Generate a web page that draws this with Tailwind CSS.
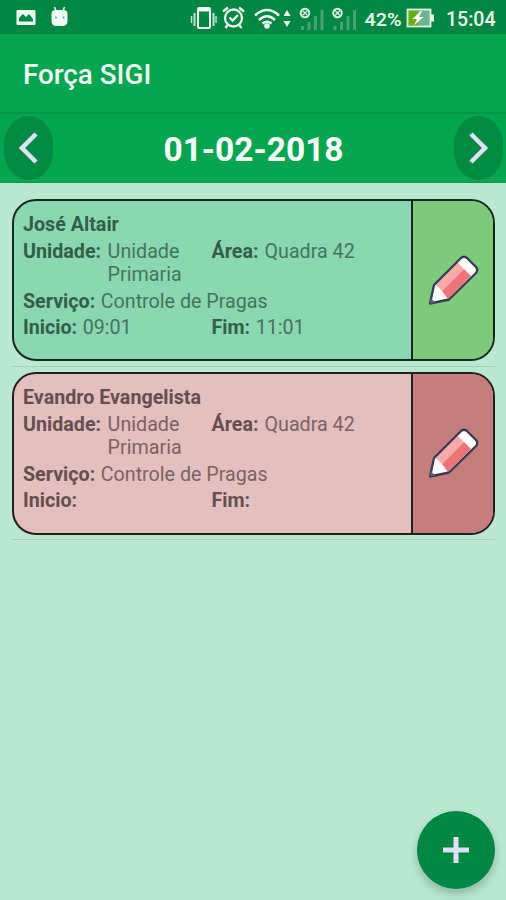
<!DOCTYPE html>
<html lang="pt-BR">
<head>
    <meta charset="UTF-8">
    <meta name="viewport" content="width=device-width, initial-scale=1.0">
    <title>Força SIGI</title>
    <script src="https://cdn.jsdelivr.net/npm/@tailwindcss/browser@4"></script>
</head>
<body class="bg-[#b9e7cf] font-['Roboto',sans-serif] h-[900px] overflow-hidden relative">
    <!-- Pencil shared by the cards -->
    <svg class="hidden">
        <symbol id="pencil" viewBox="0 0 52 52">
            <path d="M2 49.500 6 31 33 4Q36 1.500 39 4L48 13Q50.500 16 48 19L21 45.500Z" fill="#fff"/>
            <path d="M7 30 29 8 36 15 14 37Z" fill="#f8aaa9"/>
            <path d="M14 37 36 15 43 22 20 45Z" fill="#ef7478"/>
            <path d="M2 49.500 6 31 33 4Q36 1.500 39 4L48 13Q50.500 16 48 19L21 45.500Z" fill="none" stroke="#353b50" stroke-width="2.300" stroke-linejoin="round"/>
            <path d="M2 49.500 3 44 7 48.500Z" fill="#5d617b"/>
        </symbol>
    </svg>

    <!-- Status bar -->
    <header class="h-[34px] bg-[#018741] flex items-center text-white">
        <svg class="w-full h-[34px]" viewBox="0 0 506 34" fill="none">
            <rect x="16.500" y="10" width="19" height="15" rx="1" fill="#effff4"/>
            <path d="M19 21.500V18l4-4 3 3 3-3 4 5v2.500Z" fill="#018741"/>
            <path d="M54.500 7l1.500 4M64.500 7l-1.500 4" stroke="#e6fff0" stroke-width="1.500"/>
            <path d="M51.500 14q0-4 4-4h8q4 0 4 4v7q0 5-5 5h-6q-5 0-5-5Z" fill="#effff4"/>
            <circle cx="56" cy="17.500" r="1" fill="#60a97c"/><circle cx="63.500" cy="17.500" r="1" fill="#60a97c"/>

            <!-- vibrate -->
            <rect x="198" y="8" width="12" height="20" rx="1" stroke="#effff4" stroke-width="2"/>
            <path d="M198 10h12" stroke="#effff4" stroke-width="3"/>
            <path d="M194.500 13v13M213.500 13v13" stroke="#bfe5cd" stroke-width="2"/>
            <path d="M191.500 16v7M216 16v7" stroke="#bfe5cd" stroke-width="1.500"/>
            <!-- alarm -->
            <circle cx="233.500" cy="18" r="8.500" stroke="#effff4" stroke-width="2.300"/>
            <path d="M223 11.500 228 7.500M239 7.500l5 4M228 24.500l-2.500 3.500M239 24.500l2.500 3.500M229.500 17.500l3 3 5.500-5.500" stroke="#effff4" stroke-width="2.300"/>
            <!-- wifi -->
            <path d="M255 15.500q12-11 24 0M259 20q8-7.500 16 0M262.500 23.500q4.500-3.500 9 0" stroke="#effff4" stroke-width="2.600"/>
            <circle cx="267" cy="26" r="2.800" fill="#effff4"/>
            <path d="M283.500 16l3.500-6 3.500 6ZM283.500 21l3.500 6 3.500-6Z" fill="#effff4"/>
            <!-- signals -->
            <g id="signal">
                <path d="M302.500 26v4M309 22v8M315.500 16v14M322 10v20" stroke="#45a56c" stroke-width="3"/>
                <circle cx="305" cy="13" r="4.300" stroke="#dff7e8" stroke-width="2"/>
                <path d="M302.500 10.500l5 5M307.500 10.500l-5 5" stroke="#dff7e8" stroke-width="1.300"/>
            </g>
            <use href="#signal" x="32.500"/>
            <!-- battery -->
            <rect x="408" y="9.500" width="22" height="17" fill="#6bb58f"/>
            <rect x="408" y="9.500" width="10" height="17" fill="#64ad16"/>
            <rect x="407.500" y="9.500" width="23" height="17" stroke="#e0f5e5" stroke-width="1.800"/>
            <rect x="431" y="14.500" width="3" height="7" fill="#effff4"/>
            <path d="M420.500 11 412.500 19h4.500l-3 6.500 9.500-8.500H419l3-6Z" fill="#fff"/>

            <text x="364.500" y="26" font-size="19" font-weight="500" textLength="37" lengthAdjust="spacingAndGlyphs" fill="#effff4">42%</text>
            <text x="446" y="26" font-size="20" font-weight="500" textLength="49.500" lengthAdjust="spacingAndGlyphs" fill="#effff4">15:04</text>
        </svg>
    </header>

    <!-- App bar -->
    <div class="h-[80px] bg-[#03a64f] border-b-2 border-[#029647] flex items-center pl-[23px] pt-[3px]">
        <h1 class="text-[27.800px] font-medium text-[#f2fff6]">Força SIGI</h1>
    </div>

    <!-- Date selector -->
    <div class="h-[69px] bg-[#03a64f] border-b border-[#079a4b] flex items-center justify-between pl-1 pr-[3px]">
        <button class="w-[49px] h-[64px] rounded-[24.500px/28px] bg-[#018b42] flex items-center justify-center">
            <svg class="w-6 h-8" viewBox="0 0 24 32" fill="none" stroke="#e2e0f8" stroke-width="4.500"><path d="M19 2 5 16 19 30"/></svg>
        </button>
        <span class="text-[33.500px] font-bold text-white pt-[5px]">01-02-2018</span>
        <button class="w-[49px] h-[64px] rounded-[24.500px/28px] bg-[#018b42] flex items-center justify-center">
            <svg class="w-6 h-8" viewBox="0 0 24 32" fill="none" stroke="#e2e0f8" stroke-width="4.500"><path d="M5 2 19 16 5 30"/></svg>
        </button>
    </div>

    <!-- Service list -->
    <main class="pt-4 pl-3 pr-[11px] text-[19.700px] leading-[23px]">
        <div class="h-[162px] flex border-2 border-[#18261d] rounded-[24px] overflow-hidden bg-[#8ad8b0]">
            <div class="flex-1 pt-3 pl-[9px] flex flex-col gap-[3.800px] text-[#43745b]">
                <p class="font-bold text-[#315f47]">José Altair</p>
                <div class="flex">
                    <div class="w-[188.500px] flex gap-[6.500px]"><b class="text-[#315f47]">Unidade:</b><span class="w-20">Unidade Primaria</span></div>
                    <div class="flex gap-[6px]"><b class="text-[#315f47]">Área:</b><span>Quadra 42</span></div>
                </div>
                <div class="flex gap-[5.500px]"><b class="text-[#315f47]">Serviço:</b><span>Controle de Pragas</span></div>
                <div class="flex">
                    <div class="w-[188.500px] flex gap-[5.500px]"><b class="text-[#315f47]">Inicio:</b><span>09:01</span></div>
                    <div class="flex gap-[5.500px]"><b class="text-[#315f47]">Fim:</b><span>11:01</span></div>
                </div>
            </div>
            <button class="w-[82px] bg-[#7fc97d] border-l-2 border-[#18261d] flex items-center justify-center pl-px">
                <svg class="w-[52px] h-[52px]"><use href="#pencil"/></svg>
            </button>
        </div>
        <div class="h-px bg-[#a3cfb8] mt-[5px] mb-[5px]"></div>

        <div class="h-[163px] flex border-2 border-[#231f1f] rounded-[24px] overflow-hidden bg-[#e3c0be]">
            <div class="flex-1 pt-3 pl-[9px] flex flex-col gap-[3.800px] text-[#7b6261]">
                <p class="font-bold text-[#654f4e]">Evandro Evangelista</p>
                <div class="flex">
                    <div class="w-[188.500px] flex gap-[6.500px]"><b class="text-[#654f4e]">Unidade:</b><span class="w-20">Unidade Primaria</span></div>
                    <div class="flex gap-[6px]"><b class="text-[#654f4e]">Área:</b><span>Quadra 42</span></div>
                </div>
                <div class="flex gap-[5.500px]"><b class="text-[#654f4e]">Serviço:</b><span>Controle de Pragas</span></div>
                <div class="flex">
                    <div class="w-[188.500px]"><b class="text-[#654f4e]">Inicio:</b></div>
                    <div><b class="text-[#654f4e]">Fim:</b></div>
                </div>
            </div>
            <button class="w-[82px] bg-[#c57e7c] border-l-2 border-[#231f1f] flex items-center justify-center pl-px pb-px">
                <svg class="w-[52px] h-[52px]"><use href="#pencil"/></svg>
            </button>
        </div>
        <div class="h-px bg-[#a3cfb8] mt-1"></div>
    </main>

    <!-- Add button -->
    <button class="absolute right-[11px] bottom-[11px] size-[78px] rounded-full bg-[#018741] shadow-[0_5px_8px_rgba(0,60,30,0.25)] flex items-center justify-center">
        <svg class="w-[26px] h-[26px]" viewBox="0 0 26 26" stroke="#e2e0f8" stroke-width="5"><path d="M13 0v26M0 13h26"/></svg>
    </button>
</body>
</html>
